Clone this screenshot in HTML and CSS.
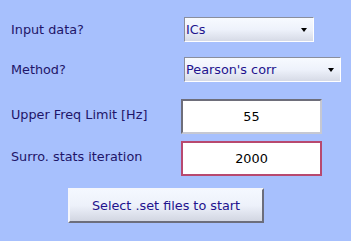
FILE: index.html
```html
<!DOCTYPE html>
<html>
<head>
<meta charset="utf-8">
<link rel="stylesheet" href="styles.css">
</head>
<body>
<div class="panel">
  <div class="row row-select1">
    <span class="label">Input data?</span>
    <div class="select select-short"><span class="select-text">ICs</span><span class="arrow"></span></div>
  </div>
  <div class="row row-select2">
    <span class="label">Method?</span>
    <div class="select select-long"><span class="select-text">Pearson's corr</span><span class="arrow"></span></div>
  </div>
  <div class="row row-edit1">
    <span class="label label-edit">Upper Freq Limit [Hz]</span>
    <div class="edit">55</div>
  </div>
  <div class="row row-edit2">
    <span class="label label-edit">Surro. stats iteration</span>
    <div class="edit edit-active">2000</div>
  </div>
  <div class="button-row">
    <div class="button">Select .set files to start</div>
  </div>
</div>
</body>
</html>
```
FILE: styles.css
```css
html, body {
  margin: 0;
  padding: 0;
  background: #a7c0fd;
  width: 351px;
  height: 241px;
  overflow: hidden;
}
.panel {
  padding-top: 17px;
  font-family: "DejaVu Sans", Verdana, sans-serif;
  font-size: 12.8px;
  display: flex;
  flex-direction: column;
}
.row {
  display: flex;
  align-items: center;
}
.label {
  width: 170px;
  padding-left: 11px;
  color: #1e1568;
  white-space: nowrap;
}
.label-edit {
  position: relative;
  top: -2px;
}
.select {
  box-sizing: border-box;
  height: 25px;
  margin-left: 3px;
  display: flex;
  align-items: center;
  justify-content: space-between;
  border-top: 1px solid #8a8e9c;
  border-left: 1px solid #8a8e9c;
  border-right: 1px solid #ffffff;
  border-bottom: 1px solid #ffffff;
  background: linear-gradient(#f7faff 0%, #eef2fb 50%, #d6dae6 100%);
  padding: 0 6px 0 1px;
}
.select-short { width: 130px; }
.select-long { width: 157px; }
.select-text {
  color: #22138e;
}
.arrow {
  width: 0;
  height: 0;
  border-left: 3.5px solid transparent;
  border-right: 3.5px solid transparent;
  border-top: 4px solid #000;
  margin-top: 1px;
}
.row-select2 { margin-top: 15px; }
.row-edit1 { margin-top: 17px; }
.row-edit2 { margin-top: 7px; }
.edit {
  box-sizing: border-box;
  width: 141px;
  height: 35px;
  background: #fff;
  color: #000;
  display: flex;
  align-items: center;
  justify-content: center;
  border-top: 2px solid #6e6e7a;
  border-left: 2px solid #6e6e7a;
  border-right: 2px solid #c6c8d2;
  border-bottom: 2px solid #c6c8d2;
}
.edit-active {
  border: 2px solid #b8496f;
}
.button-row {
  margin-top: 12px;
  padding-left: 68px;
}
.button {
  box-sizing: border-box;
  width: 196px;
  height: 35px;
  display: flex;
  align-items: center;
  justify-content: center;
  color: #22138e;
  border-top: 2px solid #f4f6fc;
  border-left: 2px solid #f4f6fc;
  border-right: 2px solid #6c6e7c;
  border-bottom: 2px solid #6c6e7c;
  background: linear-gradient(#f4f8ff 0%, #edf1fa 50%, #d2d6e2 100%);
}
```
